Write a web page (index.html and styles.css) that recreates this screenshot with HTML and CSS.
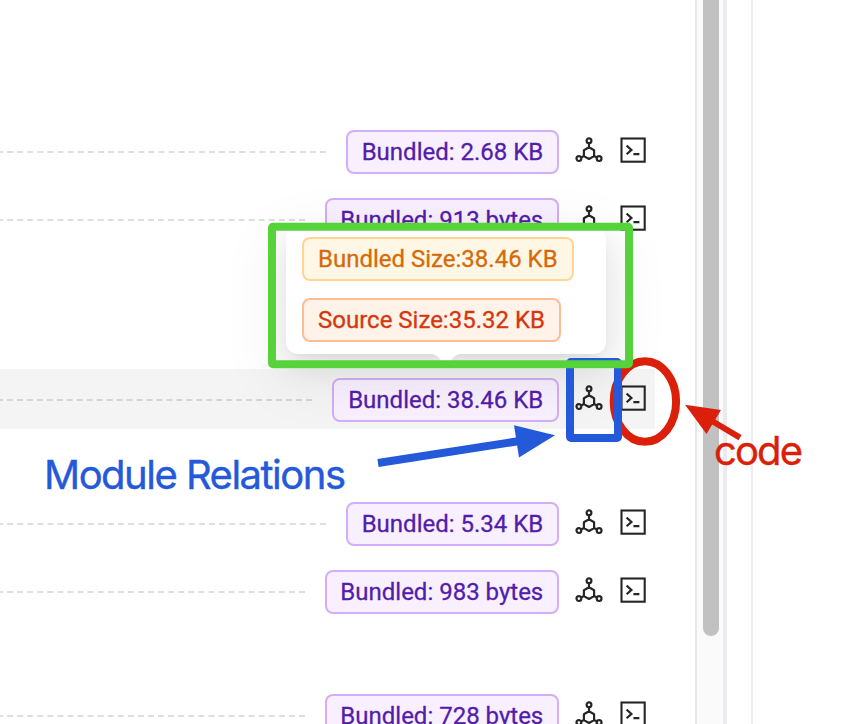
FILE: index.html
```html
<!DOCTYPE html>
<html lang="en">
<head>
<meta charset="utf-8">
<title>Module sizes</title>
<link rel="stylesheet" href="styles.css">
</head>
<body>
<svg class="symbols" aria-hidden="true">
  <symbol id="relations" viewBox="0 0 28 28">
    <g fill="none" stroke="#262626" stroke-width="2.2">
      <circle cx="14" cy="4.8" r="2.4"/>
      <circle cx="3.9" cy="22.6" r="2.4"/>
      <circle cx="24.1" cy="22.6" r="2.4"/>
      <path d="M14 11.3l5.1 2.9v5.9L14 23l-5.1-2.9v-5.9zM14 7.2v4.1M8.9 20.1l-2.9 1.5M19.1 20.1l2.9 1.5" stroke-linejoin="round"/>
    </g>
  </symbol>
  <symbol id="terminal" viewBox="0 0 28 28">
    <g fill="none" stroke="#262626" stroke-width="2.1">
      <rect x="2.5" y="2.5" width="23.2" height="23.2"/>
      <path d="M7.6 9.6l4.9 4.3-4.9 4.3M14.4 18.1h6"/>
    </g>
  </symbol>
</svg>
<div class="page">
  <main class="list">
    <div class="row"><span class="leader"></span><span class="tag">Bundled: 2.68 KB</span><svg class="icon"><use href="#relations"/></svg><svg class="icon"><use href="#terminal"/></svg></div>
    <div class="row"><span class="leader"></span><span class="tag">Bundled: 913 bytes</span><svg class="icon"><use href="#relations"/></svg><svg class="icon"><use href="#terminal"/></svg></div>
    <div class="row active group"><span class="leader"></span><span class="tag">Bundled: 38.46 KB</span><svg class="icon"><use href="#relations"/></svg><svg class="icon"><use href="#terminal"/></svg>
      <div class="popover">
        <span class="tag orange">Bundled Size:38.46 KB</span>
        <span class="tag volcano">Source Size:35.32 KB</span>
        <svg class="arrow" viewBox="0 0 32 12"><path d="M0 0C5 0 7 2 9 4L14 9Q16 11 18 9L23 4C25 2 27 0 32 0z" fill="#fff"/></svg>
      </div>
    </div>
    <div class="row spaced"><span class="leader"></span><span class="tag">Bundled: 5.34 KB</span><svg class="icon"><use href="#relations"/></svg><svg class="icon"><use href="#terminal"/></svg></div>
    <div class="row"><span class="leader"></span><span class="tag">Bundled: 983 bytes</span><svg class="icon"><use href="#relations"/></svg><svg class="icon"><use href="#terminal"/></svg></div>
    <div class="row spaced"><span class="leader"></span><span class="tag">Bundled: 728 bytes</span><svg class="icon"><use href="#relations"/></svg><svg class="icon"><use href="#terminal"/></svg></div>
  </main>
  <div class="scrollbar"><div class="thumb"></div></div>
  <div class="gutter"></div>
</div>
<svg class="notes" viewBox="0 0 844 724">
  <ellipse cx="644.9" cy="401.5" rx="31.2" ry="40.3" fill="none" stroke="#da1f0b" stroke-width="8"/>
  <rect x="570" y="362" width="48" height="76" rx="1" fill="none" stroke="#2459da" stroke-width="8"/>
  <rect x="272" y="226.8" width="357" height="137.5" rx="1" fill="none" stroke="#56d33b" stroke-width="8"/>
  <path d="M378 463L518 441.3" stroke="#2459da" stroke-width="8"/>
  <path d="M555 435.3L514 425.3 519 457.5z" fill="#2459da"/>
  <path d="M712 421L740 437.6" stroke="#da1f0b" stroke-width="6"/>
  <path d="M685 404.7L721 410 706.5 434z" fill="#da1f0b"/>
  <text x="44" y="489" textLength="302" fill="#2459da" stroke="#2459da">Module Relations</text>
  <text x="714" y="465" textLength="89" fill="#da1f0b" stroke="#da1f0b">code</text>
</svg>
</body>
</html>
```
FILE: styles.css
```css
* { box-sizing: border-box; }
body {
  margin: 0;
  overflow: hidden;
  background: #fff;
  font-family: Roboto, sans-serif;
}
.symbols { position: absolute; width: 0; height: 0; }
.page { display: flex; height: 724px; overflow: hidden; }
.list {
  display: flex;
  flex-direction: column;
  gap: 8px;
  width: 695px;
  flex: none;
  padding: 121px 40px 0 0;
}
.row {
  display: flex;
  align-items: center;
  position: relative;
  flex: none;
  height: 60px;
  padding: 2px 8px 0 0;
}
.active { background: #f4f4f4; z-index: 1; }
.group { margin-top: 112px; }
.spaced { margin-top: 56px; }
.leader {
  flex: 1;
  height: 2px;
  margin: 0 20px 0 -3px;
  border-top: 2px dashed rgba(0, 0, 0, .13);
}
.tag {
  height: 44px;
  padding: 0 13.75px;
  border: 2px solid #d3adf7;
  border-radius: 8px;
  background: #f9f0ff;
  color: #531dab;
  font-size: 24px;
  line-height: 40px;
  white-space: nowrap;
  -webkit-text-stroke: .3px currentColor;
}
.icon { width: 28px; height: 28px; margin: -5px 0 0 16px; flex: none; }
.popover {
  position: absolute;
  left: 286px;
  top: -143px;
  display: flex;
  flex-direction: column;
  align-items: flex-start;
  gap: 17px;
  width: 320px;
  height: 128px;
  padding: 11px 16px;
  border-radius: 12px;
  background: #fff;
  box-shadow: 0 12px 32px rgba(0, 0, 0, .08), 0 6px 12px -8px rgba(0, 0, 0, .12), 0 18px 56px 16px rgba(0, 0, 0, .05);
}
.popover .tag { padding: 0 14px; }
.orange { border-color: #ffd591; background: #fff7e6; color: #d46b08; }
.volcano { border-color: #ffbb96; background: #fff2e8; color: #d4380d; }
.arrow { position: absolute; left: 144px; top: 128px; width: 32px; height: 12px; }
.scrollbar {
  width: 32px;
  flex: none;
  padding-left: 6px;
  border-left: 2px solid #e8e8e8;
  border-right: 4px solid #ebebef;
  background: #fafafa;
}
.thumb { width: 16px; height: 636px; border-radius: 0 0 8px 8px; background: #c1c1c1; }
.gutter { width: 26px; flex: none; border-right: 2px solid #eee; }
.notes {
  position: absolute;
  left: 0;
  top: 0;
  z-index: 2;
  width: 844px;
  height: 724px;
  font: 40px Inter, sans-serif;
}
.notes text { stroke-width: .4px; }
```
